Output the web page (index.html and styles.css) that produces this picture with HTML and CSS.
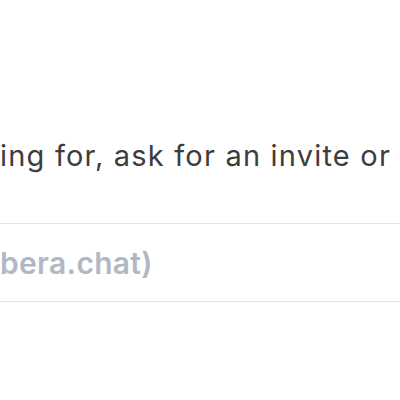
FILE: index.html
```html
<!DOCTYPE html>
<html lang="en">
<head>
    <meta charset="UTF-8">
    <meta name="viewport" content="width=device-width, initial-scale=1.0">
    <title>Join channel</title>
    <link rel="stylesheet" href="styles.css">
</head>
<body>
    <div class="dialog">
        <p class="hint">ing for, ask for an invite or</p>

        <form class="join-form">
            <input type="text" class="channel-input" placeholder="bera.chat)">
        </form>
    </div>
</body>
</html>
```

FILE: styles.css
```css
body {
    margin: 0;
    background-color: #ffffff;
    font-family: Inter, "Noto Sans", sans-serif;
}
.dialog {
    padding-top: 136px;
}
.hint {
    margin: 0;
    font-size: 29px;
    line-height: 40px;
    letter-spacing: 1.2px;
    color: #3d3d3d;
    white-space: nowrap;
}
.join-form {
    margin-top: 47px;
}
.channel-input {
    display: block;
    box-sizing: border-box;
    width: 100%;
    height: 79px;
    margin: 0;
    padding: 0;
    border: none;
    border-top: 1px solid #e3e3e3;
    border-bottom: 1px solid #e3e3e3;
    font-family: Inter, "Noto Sans", sans-serif;
    font-size: 30px;
    font-weight: 600;
    letter-spacing: 0.3px;
    color: #3d3d3d;
    outline: none;
}
.channel-input::placeholder {
    color: #b0b8c6;
}
```
